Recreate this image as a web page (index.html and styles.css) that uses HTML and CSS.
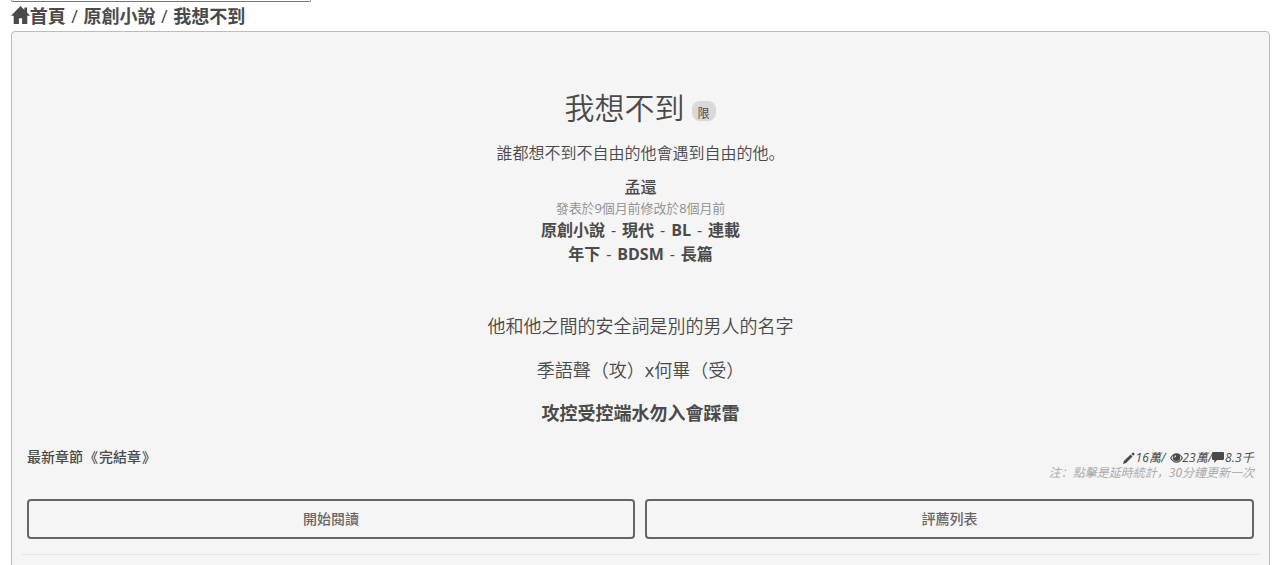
FILE: index.html
```
<!DOCTYPE html>
<html lang="zh-Hans">
<head>
<meta charset="utf-8">
<title>我想不到</title>
<link rel="stylesheet" href="styles.css">
</head>
<body>
<div class="page">
  <div class="select-edge"></div>
  <nav class="crumbs"><svg class="home" viewBox="0 0 19 18"><path d="M9.5 0 0 9.7h2.7V18h5.2v-5.7h3.2V18h5.2V9.7H19l-3-3.1V1.5h-2.6V4z"/></svg><span>首頁 <i class="slash">/</i> 原創小說 <i class="slash">/</i> 我想不到</span></nav>
  <main class="panel">
    <header class="heading">
      <h1 class="title"><span>我想不到</span><span class="badge">限</span></h1>
      <p class="brief">誰都想不到不自由的他會遇到自由的他。</p>
      <p class="author">孟還</p>
      <p class="dates">發表於<span class="latin">9</span>個月前修改於<span class="latin">8</span>個月前</p>
      <p class="tags"><b>原創小說</b> - <b>現代</b> - <b>BL</b> - <b>連載</b></p>
      <p class="tags"><b>年下</b> - <b>BDSM</b> - <b>長篇</b></p>
    </header>
    <section class="intro">
      <p>他和他之間的安全詞是別的男人的名字</p>
      <p class="pair">季語聲（攻）<span class="latin">x</span>何畢（受）</p>
      <p class="strong">攻控受控端水勿入會踩雷</p>
    </section>
    <div class="meta">
      <span class="latest">最新章節<span class="bracket">《</span>完結章<span class="bracket-end">》</span></span>
      <div class="stats">
        <div class="counts"><svg class="pencil" viewBox="0 0 12 12"><path d="M0 12 .9 9 7.6 2.6l1.9 1.9L3 11.1zM8.3 1.9l1.2-1.2q.6-.6 1.2 0l.7.7q.6.6 0 1.2L10.2 3.8z"/></svg><span>16萬/</span><svg class="eye" viewBox="0 0 13 10"><path fill-rule="evenodd" d="M0 5Q2.8.3 6.5.3T13 5Q10.2 9.7 6.5 9.7T0 5zM1.3 5Q3.5 8.6 6.5 8.6T11.7 5Q10.8 3.2 9.4 2.4 10.2 3.4 10.2 4.7 10.2 8 6.5 8T2.8 4.7Q2.8 3.4 3.6 2.4 2.2 3.2 1.3 5zM5.2 2.3Q4.2 3 4.3 4.5l1 .1Q5.3 3.5 6.3 2.9z"/></svg><span>23萬/</span><svg class="comment" viewBox="0 0 12 11"><path d="M1 0h10q1 0 1 1v6q0 1-1 1H5l-2.7 3V8H1Q0 8 0 7V1q0-1 1-1z"/></svg><span>8.3千</span></div>
        <div class="note">注：點擊是延時統計，<span class="latin">30</span>分鐘更新一次</div>
      </div>
    </div>
    <div class="actions"><a class="button">開始閱讀</a><a class="button">評薦列表</a></div>
    <div class="rule"></div>
  </main>
</div>
</body>
</html>
```
FILE: styles.css
```
* { box-sizing: border-box; }
body {
  margin: 0;
  height: 565px;
  overflow: hidden;
  background: #fff;
  color: #4a4a4a;
  font-family: "Open Sans", "Noto Sans CJK SC", sans-serif;
}
p, h1 { margin: 0; white-space: nowrap; }
svg { fill: currentColor; flex: none; }
.latin { font-weight: 400; }
.page { padding: 0 5px 0 11px; }
.select-edge { width: 300px; height: 2px; border: 1px solid #767676; border-top: 0; border-radius: 0 0 2px 2px; }
.crumbs { display: flex; align-items: center; height: 29px; font-size: 18px; font-weight: 700; line-height: 29px; word-spacing: .9px; }
.crumbs span { margin-left: -.3px; }
.slash { font-style: normal; font-weight: 500; }
.home { width: 19px; height: 18px; margin-top: -3px; }
.panel { width: 1259px; height: 560px; padding: 52px 10px 0; border: 1px solid #bcbcbc; border-radius: 4px; background: #f5f5f5; }
.heading { text-align: center; }
.title { display: flex; justify-content: center; gap: 7px; padding-right: 1px; height: 50px; font-size: 30px; font-weight: 350; line-height: 48px; }
.badge { width: 24px; height: 20px; margin-top: 17px; border-radius: 8px; background: #d9d9d9; font-size: 12px; font-weight: 400; line-height: 25px; }
.brief { height: 38px; font-size: 16px; font-weight: 350; line-height: 38px; }
.author { height: 26px; padding-top: 2px; font-size: 16px; font-weight: 500; line-height: 26px; }
.dates { height: 20px; color: #8c8c8c; font-size: 13px; font-weight: 350; line-height: 20px; letter-spacing: -.1px; }
.tags { height: 24px; font-size: 16px; font-weight: 400; line-height: 24px; word-spacing: 1.8px; }
.tags b { font-weight: 700; }
.intro { height: 182px; padding-top: 39px; text-align: center; font-size: 18px; font-weight: 350; }
.intro p { height: 43.5px; line-height: 43px; }
.intro .pair { line-height: 42px; }
.intro .strong { font-weight: 700; }
.meta { display: flex; justify-content: space-between; height: 51px; padding: 0 5px; }
.latest { font-size: 14px; font-weight: 500; line-height: 18px; }
.bracket { margin: 0 1px; }
.bracket-end { margin-left: 1px; }
.stats { font-style: italic; text-align: right; font-size: 12px; line-height: 15px; padding-top: 2px; white-space: nowrap; }
.counts { display: flex; justify-content: flex-end; align-items: center; height: 15px; letter-spacing: .2px; }
.pencil { width: 12px; height: 12px; margin-right: 1px; }
.eye { width: 13px; height: 10px; margin: 0 -.5px 0 4px; }
.comment { width: 12px; height: 11px; margin-right: .5px; }
.note { color: #a4a4a4; font-weight: 350; }
.actions { display: grid; grid-template-columns: 608px 1fr; gap: 10px; padding: 0 5px; }
.button { height: 40px; border: 2px solid #666; border-radius: 4px; color: #666; font-size: 14px; font-weight: 500; line-height: 36px; text-align: center; }
.rule { height: 1px; margin-top: 15px; background: #e6e6e6; }
```
